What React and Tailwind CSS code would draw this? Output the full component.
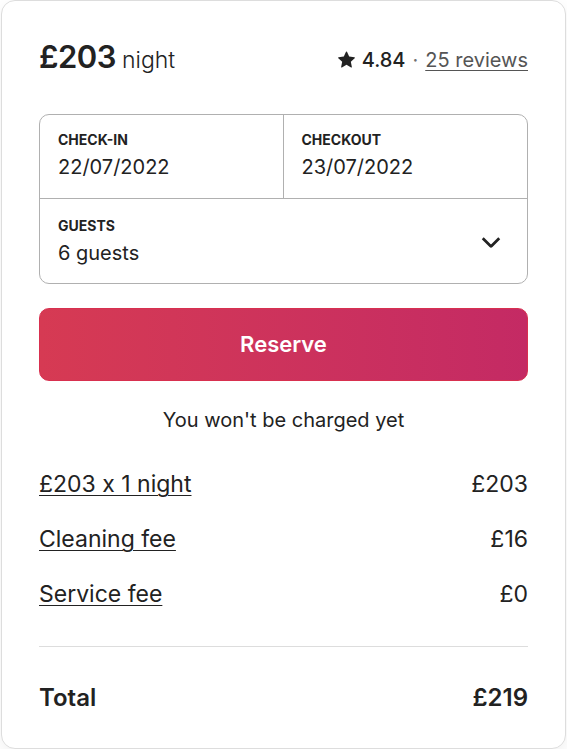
import React from "react";

const lineItems = [
  { label: "£203 x 1 night", amount: "£203" },
  { label: "Cleaning fee", amount: "£16" },
  { label: "Service fee", amount: "£0" },
];

const StarIcon = () => (
  <svg viewBox="0 0 32 32" className="w-[17px] h-[17px] fill-[#222222]" aria-hidden="true">
    <path d="M15.094 1.579l-4.124 8.885-9.86 1.27a1 1 0 0 0-.542 1.736l7.293 6.565-1.965 9.852a1 1 0 0 0 1.483 1.061L16 25.951l8.625 4.997a1 1 0 0 0 1.482-1.06l-1.965-9.853 7.293-6.565a1 1 0 0 0-.541-1.735l-9.86-1.271-4.127-8.885a1 1 0 0 0-1.814 0z" />
  </svg>
);

const ChevronDown = () => (
  <svg
    viewBox="0 0 32 32"
    className="w-[22px] h-[22px] fill-none stroke-[#222222] overflow-visible"
    strokeWidth="4"
    aria-hidden="true"
  >
    <path d="M28 12 16.7 23.3a1 1 0 0 1-1.4 0L4 12" />
  </svg>
);

const BookingCard = () => {
  return (
    <div className="ml-px w-[565px] h-[749px] border border-[#dddddd] rounded-[14px] bg-white px-[37px] pt-[40px] shadow-[0_6px_16px_rgba(0,0,0,0.06)]">
      {/* Price + rating */}
      <div className="flex items-baseline justify-between">
        <div className="flex items-baseline gap-[6px]">
          <span className="text-[31px] leading-none font-semibold tracking-[-0.5px]">£203</span>
          <span className="text-[23px] leading-none font-light">night</span>
        </div>
        <div className="flex items-center gap-[7px] text-[20px] leading-none">
          <StarIcon />
          <span className="font-medium">4.84</span>
          <span className="text-[#717171]">·</span>
          <span className="text-[#555555] underline underline-offset-[3px] decoration-[1px]">25 reviews</span>
        </div>
      </div>

      {/* Dates + guests */}
      <div className="mt-[42px] border border-[#b0b0b0] rounded-[10px]">
        <div className="grid grid-cols-2 border-b border-[#b0b0b0]">
          <div className="h-[83px] pl-[18px] pt-[16px] border-r border-[#b0b0b0]">
            <div className="text-[14px] leading-[18px] font-bold uppercase">Check-in</div>
            <div className="mt-[5px] text-[20px] leading-[26px]">22/07/2022</div>
          </div>
          <div className="h-[83px] pl-[18px] pt-[16px]">
            <div className="text-[14px] leading-[18px] font-bold uppercase">Checkout</div>
            <div className="mt-[5px] text-[20px] leading-[26px]">23/07/2022</div>
          </div>
        </div>
        <div className="h-[84px] flex items-center justify-between pl-[18px] pr-[25px]">
          <div>
            <div className="text-[14px] leading-[18px] font-bold uppercase">Guests</div>
            <div className="mt-[5px] text-[20px] leading-[26px]">6 guests</div>
          </div>
          <ChevronDown />
        </div>
      </div>

      {/* Reserve */}
      <button className="mt-[24px] w-full h-[73px] rounded-[10px] bg-gradient-to-r from-[#d63a53] to-[#c42a64] border border-[#d8304f] text-white text-[22px] font-semibold">
        Reserve
      </button>

      <p className="mt-[27px] text-center text-[20px] leading-[24px]">You won't be charged yet</p>

      {/* Price breakdown */}
      <div className="mt-[25px] [font-feature-settings:'calt'_0]">
        {lineItems.map((item, i) => (
          <div key={i} className="h-[55px] flex items-center justify-between text-[23px]">
            <span className="underline underline-offset-[3px] decoration-[1px]">{item.label}</span>
            <span>{item.amount}</span>
          </div>
        ))}
      </div>

      <div className="mt-[24px] border-t border-[#dddddd]" />

      <div className="mt-[36px] flex items-center justify-between text-[24px] leading-[30px] font-semibold">
        <span>Total</span>
        <span>£219</span>
      </div>
    </div>
  );
};

export default function App() {
  return (
    <div className="bg-white min-h-[749px] text-[#222222] font-['Inter',sans-serif]">
      <BookingCard />
    </div>
  );
}
